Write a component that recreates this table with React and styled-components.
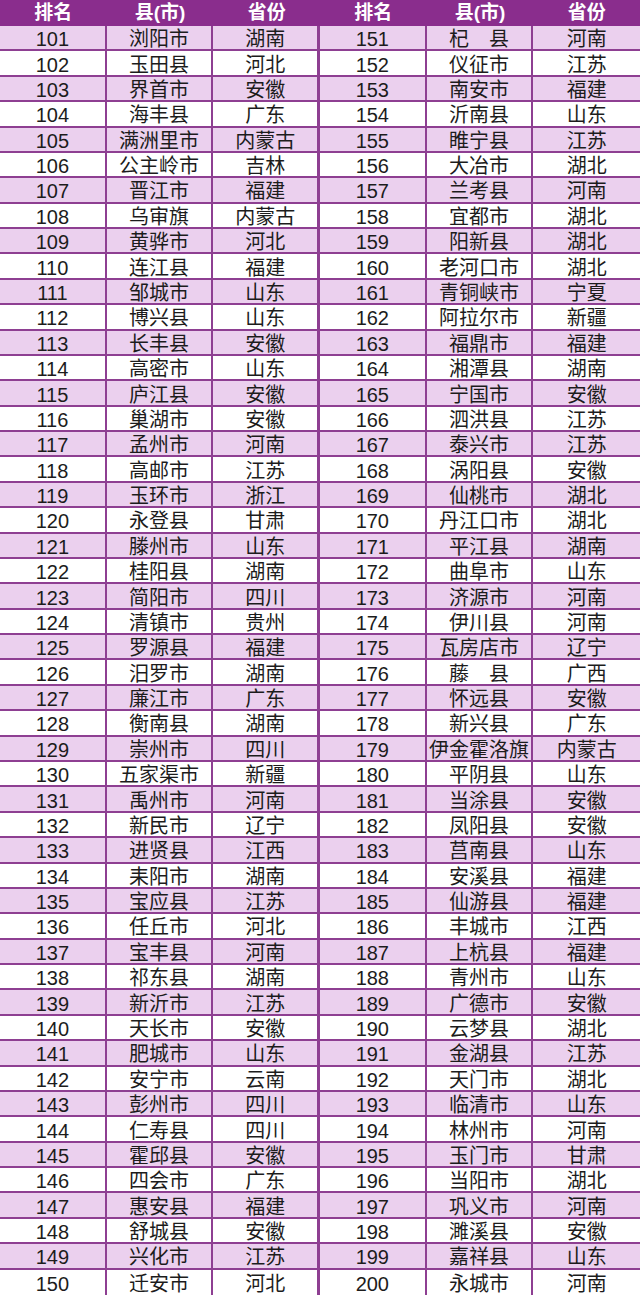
import React from "react"
import styled, { createGlobalStyle } from "styled-components"

const GlobalStyle = createGlobalStyle`
  html, body {
    margin: 0;
    padding: 0;
    background: #ffffff;
  }
`;

const left = [
  ["101", "浏阳市", "湖南"], ["102", "玉田县", "河北"], ["103", "界首市", "安徽"],
  ["104", "海丰县", "广东"], ["105", "满洲里市", "内蒙古"], ["106", "公主岭市", "吉林"],
  ["107", "晋江市", "福建"], ["108", "乌审旗", "内蒙古"], ["109", "黄骅市", "河北"],
  ["110", "连江县", "福建"], ["111", "邹城市", "山东"], ["112", "博兴县", "山东"],
  ["113", "长丰县", "安徽"], ["114", "高密市", "山东"], ["115", "庐江县", "安徽"],
  ["116", "巢湖市", "安徽"], ["117", "孟州市", "河南"], ["118", "高邮市", "江苏"],
  ["119", "玉环市", "浙江"], ["120", "永登县", "甘肃"], ["121", "滕州市", "山东"],
  ["122", "桂阳县", "湖南"], ["123", "简阳市", "四川"], ["124", "清镇市", "贵州"],
  ["125", "罗源县", "福建"], ["126", "汨罗市", "湖南"], ["127", "廉江市", "广东"],
  ["128", "衡南县", "湖南"], ["129", "崇州市", "四川"], ["130", "五家渠市", "新疆"],
  ["131", "禹州市", "河南"], ["132", "新民市", "辽宁"], ["133", "进贤县", "江西"],
  ["134", "耒阳市", "湖南"], ["135", "宝应县", "江苏"], ["136", "任丘市", "河北"],
  ["137", "宝丰县", "河南"], ["138", "祁东县", "湖南"], ["139", "新沂市", "江苏"],
  ["140", "天长市", "安徽"], ["141", "肥城市", "山东"], ["142", "安宁市", "云南"],
  ["143", "彭州市", "四川"], ["144", "仁寿县", "四川"], ["145", "霍邱县", "安徽"],
  ["146", "四会市", "广东"], ["147", "惠安县", "福建"], ["148", "舒城县", "安徽"],
  ["149", "兴化市", "江苏"], ["150", "迁安市", "河北"],
];

const right = [
  ["151", "杞　县", "河南"], ["152", "仪征市", "江苏"], ["153", "南安市", "福建"],
  ["154", "沂南县", "山东"], ["155", "睢宁县", "江苏"], ["156", "大冶市", "湖北"],
  ["157", "兰考县", "河南"], ["158", "宜都市", "湖北"], ["159", "阳新县", "湖北"],
  ["160", "老河口市", "湖北"], ["161", "青铜峡市", "宁夏"], ["162", "阿拉尔市", "新疆"],
  ["163", "福鼎市", "福建"], ["164", "湘潭县", "湖南"], ["165", "宁国市", "安徽"],
  ["166", "泗洪县", "江苏"], ["167", "泰兴市", "江苏"], ["168", "涡阳县", "安徽"],
  ["169", "仙桃市", "湖北"], ["170", "丹江口市", "湖北"], ["171", "平江县", "湖南"],
  ["172", "曲阜市", "山东"], ["173", "济源市", "河南"], ["174", "伊川县", "河南"],
  ["175", "瓦房店市", "辽宁"], ["176", "藤　县", "广西"], ["177", "怀远县", "安徽"],
  ["178", "新兴县", "广东"], ["179", "伊金霍洛旗", "内蒙古"], ["180", "平阴县", "山东"],
  ["181", "当涂县", "安徽"], ["182", "凤阳县", "安徽"], ["183", "莒南县", "山东"],
  ["184", "安溪县", "福建"], ["185", "仙游县", "福建"], ["186", "丰城市", "江西"],
  ["187", "上杭县", "福建"], ["188", "青州市", "山东"], ["189", "广德市", "安徽"],
  ["190", "云梦县", "湖北"], ["191", "金湖县", "江苏"], ["192", "天门市", "湖北"],
  ["193", "临清市", "山东"], ["194", "林州市", "河南"], ["195", "玉门市", "甘肃"],
  ["196", "当阳市", "湖北"], ["197", "巩义市", "河南"], ["198", "濉溪县", "安徽"],
  ["199", "嘉祥县", "山东"], ["200", "永城市", "河南"],
];

const headers = ["排名", "县(市)", "省份", "排名", "县(市)", "省份"];

const Table = styled.div`
  display: grid;
  grid-template-columns: repeat(6, minmax(0, 1fr));
  grid-template-rows: 26px repeat(50, minmax(0, 1fr));
  width: 640px;
  height: 1295px;
  font-family: "Liberation Sans", "Noto Sans CJK SC", sans-serif;
  overflow: hidden;
`;

const HeadCell = styled.div`
  display: flex;
  align-items: center;
  justify-content: center;
  background: #8a2d8d;
  color: #ffffff;
  font-size: 19px;
  line-height: 1;
  font-weight: bold;
  padding-bottom: 1px;
  min-height: 0;
`;

const Cell = styled.div`
  display: flex;
  align-items: center;
  justify-content: center;
  min-height: 0;
  background: ${props => (props.$shade ? "#ebd0ee" : "#ffffff")};
  color: #1c1c1c;
  font-size: 20px;
  line-height: 1;
  padding-top: 3px;
  box-sizing: border-box;
  border-bottom: ${props => (props.$bottom ? "0" : "2px")} solid #8e3f92;
  border-right: ${props => (props.$mid ? "3px" : props.$last ? "0" : "2px")} solid #8e3f92;
  white-space: nowrap;
  overflow: visible;
`;

const App = () => {
  return (
    <>
      <GlobalStyle />
      <Table>
        {headers.map((h, i) => (
          <HeadCell key={"h" + i}>{h}</HeadCell>
        ))}
        {left.map((row, r) => {
          const cells = [...row, ...right[r]];
          return cells.map((text, c) => (
            <Cell
              key={r + "-" + c}
              $shade={r % 2 === 0}
              $mid={c === 2}
              $last={c === 5}
              $bottom={r === left.length - 1}
            >
              {text}
            </Cell>
          ));
        })}
      </Table>
    </>
  )
}

export default App
